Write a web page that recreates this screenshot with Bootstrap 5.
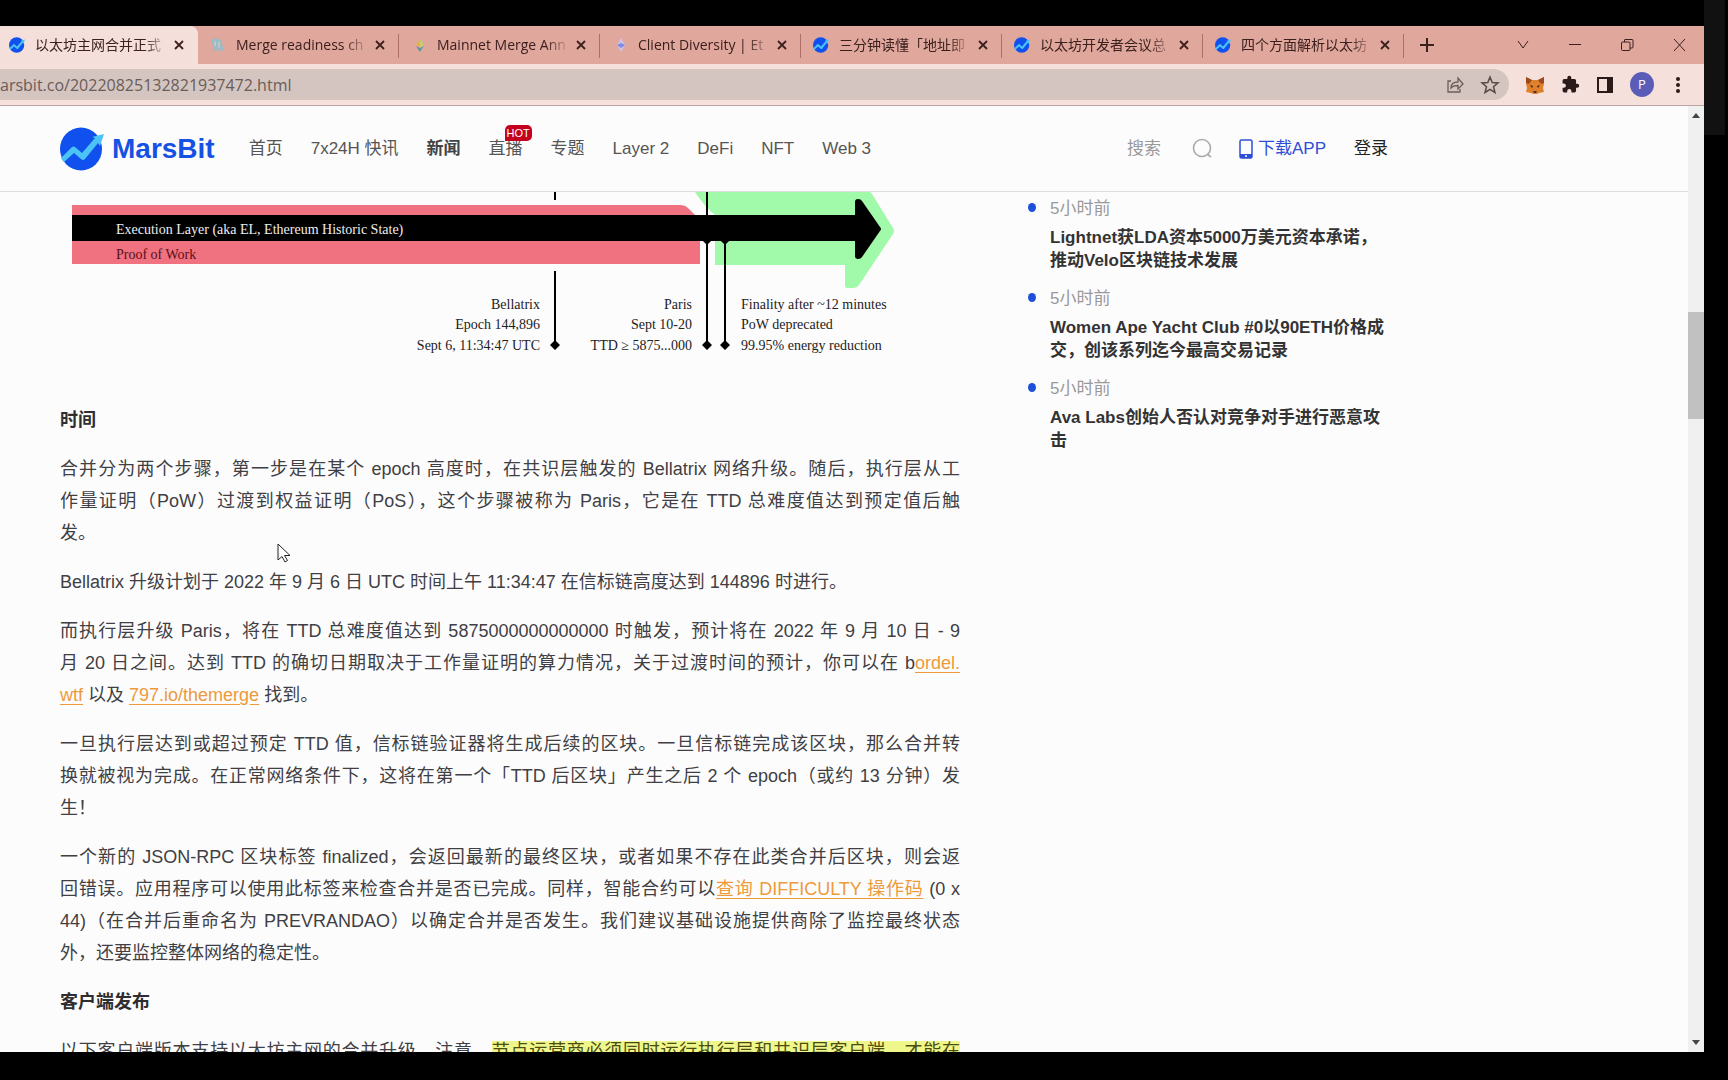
<!DOCTYPE html>
<html lang="zh-CN">
<head>
<meta charset="utf-8">
<meta name="viewport" content="width=device-width, initial-scale=1">
<title>以太坊主网合并正式公布 - MarsBit</title>
<link href="https://cdn.jsdelivr.net/npm/bootstrap@5.3.0/dist/css/bootstrap.min.css" rel="stylesheet">
<style>
  body { background: #000; font-family: "Liberation Sans", "Noto Sans CJK SC", sans-serif; color: #444; }
  .chrome-font { font-family: "Open Sans", "Noto Sans CJK SC", sans-serif; color: #3b201e; }
  .desk { height: 100vh; }
  .browser { padding: 26px 0 28px; min-width: 0; }
  .gutter { width: 24px; }
  .gutter-thumb { width: 21px; height: 135px; background: #111; }

  /* tab strip */
  .tabstrip { height: 38px; background: #e0a79d; }
  .tab-item { width: 201px; padding: 0 14px 0 12px; position: relative; }
  .tab-item.active { width: 198px; padding-left: 9px; background: #f5dfdb; border-radius: 0 8px 0 0; }
  .tab-item:not(.active)::after { content: ""; position: absolute; right: 0; top: 8px; width: 1px; height: 24px; background: #ad6f67; }
  .tab-item .fav { width: 16px; height: 18px; }
  .tab-item .icon-btn { margin-left: 6px; }
  .tab-name { font-size: 14px; line-height: 24px; margin-left: 10px; color: inherit; text-decoration: none;
    -webkit-mask-image: linear-gradient(90deg, #000 82%, transparent); mask-image: linear-gradient(90deg, #000 82%, transparent); }
  .icon-btn { border: 0; background: none; padding: 0; line-height: 0; color: inherit; }
  .win-controls { gap: 38px; padding-right: 18px; }

  /* address bar */
  .toolbar { height: 42px; background: #f5e0dc; border-bottom: 1px solid #b9a3a3; padding-right: 18px; }
  .omnibox { height: 31px; background: #d4c5c0; border-radius: 0 16px 16px 0; padding-right: 9px; gap: 15px; }
  .omnibox input { border: 0; background: none; padding: 0; font-size: 16px; color: #6a5c59; outline: 0; min-width: 0; }
  .ext-icons { gap: 16px; margin-left: 16px; }
  .avatar { width: 24px; height: 25px; border-radius: 50%; background: #5b5cb8; color: #fff; font-size: 13px; line-height: 25px; text-align: center; }

  /* site */
  .viewport { background: #fdfcfd; min-height: 0; }
  .site { min-width: 0; }
  .site-head { height: 86px; border-bottom: 1px solid #dedee0; padding-left: 60px; flex: none; }
  .site-head .inner { max-width: 1328px; }
  .brand { font-size: 28px; line-height: 32px; font-weight: 700; color: #1552e4; text-decoration: none; gap: 8px; }
  .site-nav { gap: 28px; margin-left: 34px; font-size: 17px; line-height: 24px; }
  .site-nav a { color: #555; text-decoration: none; position: relative; white-space: nowrap; }
  .site-nav a.now { font-weight: 700; color: #444; }
  .hot { position: absolute; left: 16px; top: -12px; height: 16px; padding: 0 2px; border-radius: 5px 5px 5px 0; background: #c4021f; color: #fff; font-size: 11px; line-height: 16px; }
  .head-tools { font-size: 17px; line-height: 24px; }
  .head-tools input { width: 65px; border: 0; padding: 0; background: none; color: #999; outline: 0; }
  .head-tools input::placeholder { color: #999; opacity: 1; }
  .head-tools a { text-decoration: none; white-space: nowrap; }
  .get-app { color: #2d4fd6; gap: 5px; margin-left: 26px; }
  .login { color: #222; margin-left: 28px; }

  .columns { padding-left: 60px; gap: 68px; min-height: 0; }
  .article { width: 900px; flex: none; font-size: 18px; line-height: 32px; color: #3f3f44; }
  .article figure { margin: 0 0 28px; }
  .article figure svg { display: block; }
  .article h2 { font-size: 18px; line-height: 32px; font-weight: 700; margin: 0 0 17px; color: #2e2e30; }
  .article p { margin: 0 0 17px; }
  .full { display: block; text-align: justify; text-align-last: justify; white-space: nowrap; }
  .article a { color: #ec9a3a; text-underline-offset: 3px; }
  .hl { background: #f0f78a; color: #4b4d12; }
  .diagram text { font-family: "Liberation Serif", serif; font-size: 14px; fill: #222; }

  .newsfeed { padding: 5px 0 0; font-size: 17px; }
  .newsfeed li { padding-left: 22px; margin-bottom: 15px; position: relative; }
  .newsfeed li::before { content: ""; position: absolute; left: 0; top: 6px; width: 8px; height: 9px; border-radius: 50%; background: #1d4fd8; }
  .newsfeed time { display: block; line-height: 24px; margin-bottom: 5px; color: #999; }
  .newsfeed a { display: block; line-height: 23px; font-weight: 700; color: #333; text-decoration: none; white-space: nowrap; }

  .scroller { width: 16px; background: #f1f0f1; position: relative; padding: 7px 0; flex: none; }
  .scroller i { position: absolute; left: 0; width: 16px; top: 206px; height: 107px; background: #c1c1c1; }
  .pointer { position: absolute; left: 277px; top: 543px; }
</style>
<script src="https://cdn.jsdelivr.net/npm/bootstrap@5.3.0/dist/js/bootstrap.bundle.min.js"></script>
</head>
<body class="overflow-hidden">
<svg width="0" height="0" class="position-absolute" aria-hidden="true">
  <symbol id="mars" viewBox="0 0 44 44">
    <ellipse cx="21" cy="22" rx="21" ry="21.500" fill="#0f50ee"/>
    <path d="M1 31 12 20q1.500-1 3 0l7 6 13-15-3-1 12-3-4 12-2-3-13 16q-2 2-4 0l-7-6-10 9q-3-3-3-4z" fill="#4cc3f5"/>
  </symbol>
  <symbol id="x" viewBox="0 0 10 10"><path d="M1 1 9 9M9 1 1 9" stroke="currentColor" stroke-width="1.800"/></symbol>
</svg>

<div class="desk d-flex">
  <div class="browser flex-grow-1 d-flex flex-column">

    <div class="tabstrip chrome-font d-flex align-items-center flex-shrink-0">
      <div class="tab-item active h-100 d-flex align-items-center">
        <svg class="fav flex-shrink-0"><use href="#mars"/></svg>
        <a href="#" class="tab-name flex-grow-1 text-nowrap">以太坊主网合并正式</a>
        <button class="icon-btn" aria-label="关闭"><svg width="10" height="10"><use href="#x"/></svg></button>
      </div>
      <div class="tab-item h-100 d-flex align-items-center">
        <svg class="fav flex-shrink-0" viewBox="0 0 16 18"><path d="M2 4q3-3 6-1 4 0 4 5l2 7H9l-1-4-2 4H3V9Q1 7 2 4z" fill="#9bbcc4"/><path d="M5 5v5M9 6v6" stroke="#d8d3cf"/></svg>
        <a href="#" class="tab-name flex-grow-1 text-nowrap">Merge readiness ch</a>
        <button class="icon-btn" aria-label="关闭"><svg width="10" height="10"><use href="#x"/></svg></button>
      </div>
      <div class="tab-item h-100 d-flex align-items-center">
        <svg class="fav flex-shrink-0" viewBox="0 0 16 18"><path d="M9 3 5 9l4 2z" fill="#e5b04c"/><path d="m9 3 4 6-4 2z" fill="#c6cf6a"/><path d="m5 10 4 6v-4z" fill="#6a83b8"/><path d="m13 10-4 6v-4z" fill="#57a79b"/></svg>
        <a href="#" class="tab-name flex-grow-1 text-nowrap">Mainnet Merge Ann</a>
        <button class="icon-btn" aria-label="关闭"><svg width="10" height="10"><use href="#x"/></svg></button>
      </div>
      <div class="tab-item h-100 d-flex align-items-center">
        <svg class="fav flex-shrink-0" viewBox="0 0 16 18"><path d="M9 2 5 9l4 7 4-7z" fill="#cfc0e6"/><path d="M9 7 5 9l4 3 4-3z" fill="#7f8be0"/></svg>
        <a href="#" class="tab-name flex-grow-1 text-nowrap">Client Diversity | Et</a>
        <button class="icon-btn" aria-label="关闭"><svg width="10" height="10"><use href="#x"/></svg></button>
      </div>
      <div class="tab-item h-100 d-flex align-items-center">
        <svg class="fav flex-shrink-0"><use href="#mars"/></svg>
        <a href="#" class="tab-name flex-grow-1 text-nowrap">三分钟读懂「地址即</a>
        <button class="icon-btn" aria-label="关闭"><svg width="10" height="10"><use href="#x"/></svg></button>
      </div>
      <div class="tab-item h-100 d-flex align-items-center">
        <svg class="fav flex-shrink-0"><use href="#mars"/></svg>
        <a href="#" class="tab-name flex-grow-1 text-nowrap">以太坊开发者会议总</a>
        <button class="icon-btn" aria-label="关闭"><svg width="10" height="10"><use href="#x"/></svg></button>
      </div>
      <div class="tab-item h-100 d-flex align-items-center">
        <svg class="fav flex-shrink-0"><use href="#mars"/></svg>
        <a href="#" class="tab-name flex-grow-1 text-nowrap">四个方面解析以太坊</a>
        <button class="icon-btn" aria-label="关闭"><svg width="10" height="10"><use href="#x"/></svg></button>
      </div>
      <button class="icon-btn ms-3" aria-label="新标签页"><svg width="14" height="14"><path d="M7 0v14M0 7h14" stroke="currentColor" stroke-width="2"/></svg></button>
      <div class="win-controls d-flex align-items-center ms-auto">
        <button class="icon-btn" aria-label="搜索标签页"><svg width="14" height="14"><path d="m2 3 5 7 5-7" fill="none" stroke="currentColor"/></svg></button>
        <button class="icon-btn" aria-label="最小化"><svg width="14" height="14"><path d="M1 6.500h12" stroke="currentColor"/></svg></button>
        <button class="icon-btn" aria-label="还原"><svg width="14" height="14" fill="none" stroke="currentColor"><rect x="1.500" y="4" width="8.500" height="8.500" rx="1"/><path d="M4.500 4V2q0-.5.5-.5h7q1 0 1 1v6.500q0 1-1 1h-2"/></svg></button>
        <button class="icon-btn" aria-label="关闭窗口"><svg width="14" height="14"><path d="m2 1 11 12M13 1 2 13" stroke="currentColor"/></svg></button>
      </div>
    </div>

    <div class="toolbar chrome-font d-flex align-items-center flex-shrink-0">
      <div class="omnibox flex-grow-1 d-flex align-items-center">
        <input type="text" class="flex-grow-1" aria-label="网址" value="arsbit.co/20220825132821937472.html">
        <button class="icon-btn" aria-label="分享"><svg width="19" height="18" viewBox="0 0 19 18" fill="none" stroke="#6b5d5b" stroke-width="1.300"><path d="M5 5H2v11h12v-3"/><path d="M5 12q0-6 7-6V2l5 6-5 5V9.500q-5 0-7 2.500z"/></svg></button>
        <button class="icon-btn" aria-label="收藏"><svg width="20" height="20" viewBox="0 0 20 20" fill="none" stroke="#5a4a48" stroke-width="1.500"><path d="m10 2 2.200 5.500 5.800.4-4.500 3.800 1.500 5.800-5-3.200-5 3.200 1.500-5.800L2 7.900l5.800-.4z"/></svg></button>
      </div>
      <div class="ext-icons d-flex align-items-center">
        <button class="icon-btn" aria-label="MetaMask"><svg width="20" height="18" viewBox="0 0 20 18"><path d="m1 1 6 3h6l6-3v7l-1 4 1 4-5 1-2 1H8l-2-1-5-1 1-4-1-4z" fill="#e0802c"/><path d="m1 1 6 3-3 4-3-1zM19 1l-6 3 3 4 3-1z" fill="#9b4a1c"/><path d="m5 9 3 1-1 2zM15 9l-3 1 1 2z" fill="#3b2418"/><path d="M8 15h4l-1 2H9z" fill="#4a342c"/></svg></button>
        <button class="icon-btn" aria-label="扩展程序"><svg width="19" height="19" viewBox="0 0 24 24" fill="#2b1a1a"><path d="M20.500 11H19V7a2 2 0 0 0-2-2h-4V3.500a2.500 2.500 0 0 0-5 0V5H4a2 2 0 0 0-2 2v3.800h1.500a2.700 2.700 0 0 1 0 5.400H2V20c0 1.100.9 2 2 2h3.800v-1.500a2.700 2.700 0 0 1 5.400 0V22H17a2 2 0 0 0 2-2v-4h1.500a2.500 2.500 0 0 0 0-5z"/></svg></button>
        <button class="icon-btn" aria-label="侧边栏"><svg width="18" height="18"><path d="M2 2h14v14H2z" fill="none" stroke="#2b1a1a" stroke-width="2"/><path d="M11 2h5v14h-5z" fill="#2b1a1a"/></svg></button>
        <button class="icon-btn avatar" aria-label="个人资料">P</button>
        <button class="icon-btn" aria-label="菜单"><svg width="16" height="18" fill="#2b1a1a"><circle cx="8" cy="3" r="2"/><circle cx="8" cy="9" r="2"/><circle cx="8" cy="15" r="2"/></svg></button>
      </div>
    </div>

    <div class="viewport flex-grow-1 d-flex overflow-hidden">
      <div class="site flex-grow-1 d-flex flex-column overflow-hidden">
        <header class="site-head">
          <div class="inner h-100 d-flex align-items-center">
            <a href="#" class="brand d-flex align-items-center"><svg width="44" height="44"><use href="#mars"/></svg>MarsBit</a>
            <nav class="site-nav d-flex">
              <a href="#">首页</a><a href="#">7x24H 快讯</a><a href="#" class="now">新闻</a>
              <a href="#">直播<span class="hot">HOT</span></a><a href="#">专题</a><a href="#">Layer 2</a>
              <a href="#">DeFi</a><a href="#">NFT</a><a href="#">Web 3</a>
            </nav>
            <div class="head-tools d-flex align-items-center ms-auto">
              <input type="text" placeholder="搜索" aria-label="搜索">
              <button class="icon-btn" aria-label="开始搜索"><svg width="21" height="21" fill="none" stroke="#aaa" stroke-width="1.600"><circle cx="10" cy="10" r="8.500"/><path d="m15 16 4 3"/></svg></button>
              <a href="#" class="get-app d-flex align-items-center"><svg width="14" height="20"><rect x="1" y="1" width="12" height="18" rx="1.500" fill="none" stroke="#2d4fd6" stroke-width="1.500"/><path d="M1 15h12v4H1z" fill="#2d4fd6"/><path d="M6 17h2" stroke="#fff" stroke-width="1.500"/></svg>下载APP</a>
              <a href="#" class="login">登录</a>
            </div>
          </div>
        </header>

        <div class="columns d-flex flex-grow-1 overflow-hidden">
          <main class="article">
            <figure>
              <svg class="diagram" width="900" height="184" viewBox="60 192 900 184" role="img" aria-label="合并时间线">
                <path d="M72 205h608q5 0 8 3l12 12v44H72z" fill="#f0717f"/>
                <path d="M695 192h174q2 0 3 2l21 34q2 3 0 6l-34 51q-2 3-5 3h-7q-2 0-2-3v-20H715v-50q-10-8-20-23z" fill="#a1f9aa"/>
                <path d="M72 215h783v-13q0-3 3-3 3 0 4 2l18 26q2 2 0 4l-18 26q-1 2-4 2-3 0-3-3v-15H72z"/>
                <path d="M555 192v8M555 271v74M725 241v104M707 192v153" stroke="#000" stroke-width="2"/>
                <path d="m555 340 5 5-5 5-5-5zM707 340l5 5-5 5-5-5zM725 340l5 5-5 5-5-5zM702 240h10l-5 5zM720 240h10l-5 5z"/>
                <text x="116" y="234" style="fill:#eee">Execution Layer (aka EL, Ethereum Historic State)</text>
                <text x="116" y="259" style="fill:#5a1019">Proof of Work</text>
                <g text-anchor="end">
                  <text x="540" y="309">Bellatrix</text><text x="540" y="329">Epoch 144,896</text><text x="540" y="350">Sept 6, 11:34:47 UTC</text>
                  <text x="692" y="309">Paris</text><text x="692" y="329">Sept 10-20</text><text x="692" y="350">TTD ≥ 5875...000</text>
                </g>
                <text x="741" y="309">Finality after ~12 minutes</text><text x="741" y="329">PoW deprecated</text><text x="741" y="350">99.95% energy reduction</text>
              </svg>
            </figure>
            <h2>时间</h2>
            <p><span class="full">合并分为两个步骤，第一步是在某个 epoch 高度时，在共识层触发的 Bellatrix 网络升级。随后，执行层从工</span>
              <span class="full">作量证明（PoW）过渡到权益证明（PoS），这个步骤被称为 Paris，它是在 TTD 总难度值达到预定值后触</span>发。</p>
            <p>Bellatrix 升级计划于 2022 年 9 月 6 日 UTC 时间上午 11:34:47 在信标链高度达到 144896 时进行。</p>
            <p><span class="full">而执行层升级 Paris，将在 TTD 总难度值达到 5875000000000000 时触发，预计将在 2022 年 9 月 10 日 - 9</span>
              <span class="full">月 20 日之间。达到 TTD 的确切日期取决于工作量证明的算力情况，关于过渡时间的预计，你可以在 b<a href="#">ordel.</a></span><a href="#">wtf</a> 以及 <a href="#">797.io/themerge</a> 找到。</p>
            <p><span class="full">一旦执行层达到或超过预定 TTD 值，信标链验证器将生成后续的区块。一旦信标链完成该区块，那么合并转</span>
              <span class="full">换就被视为完成。在正常网络条件下，这将在第一个「TTD 后区块」产生之后 2 个 epoch（或约 13 分钟）发</span>生！</p>
            <p><span class="full">一个新的 JSON-RPC 区块标签 finalized，会返回最新的最终区块，或者如果不存在此类合并后区块，则会返</span>
              <span class="full">回错误。应用程序可以使用此标签来检查合并是否已完成。同样，智能合约可以<a href="#">查询 DIFFICULTY 操作码</a> (0 x</span>
              <span class="full">44)（在合并后重命名为 PREVRANDAO）以确定合并是否发生。我们建议基础设施提供商除了监控最终状态</span>外，还要监控整体网络的稳定性。</p>
            <h2>客户端发布</h2>
            <p><span class="full">以下客户端版本支持以太坊主网的合并升级。注意，<span class="hl">节点运营商必须同时运行执行层和共识层客户端，才能在</span></span></p>
          </main>

          <aside>
            <ul class="newsfeed list-unstyled">
              <li><time>5小时前</time><a href="#">Lightnet获LDA资本5000万美元资本承诺，<br>推动Velo区块链技术发展</a></li>
              <li><time>5小时前</time><a href="#">Women Ape Yacht Club #0以90ETH价格成<br>交，创该系列迄今最高交易记录</a></li>
              <li><time>5小时前</time><a href="#">Ava Labs创始人否认对竞争对手进行恶意攻<br>击</a></li>
            </ul>
          </aside>
        </div>
      </div>
      <div class="scroller d-flex flex-column justify-content-between align-items-center">
        <svg width="8" height="5"><path d="m4 0 4 5H0z" fill="#444"/></svg><i></i>
        <svg width="8" height="5"><path d="M0 0h8L4 5z" fill="#444"/></svg>
      </div>
    </div>
  </div>
  <div class="gutter flex-shrink-0"><div class="gutter-thumb"></div></div>
</div>
<svg class="pointer" width="15" height="20" viewBox="0 0 15 20"><path d="M1 1v16l4-3.500 3 5.500 2.500-1.500-3-5H13z" fill="#fff" stroke="#222"/></svg>
</body>
</html>
